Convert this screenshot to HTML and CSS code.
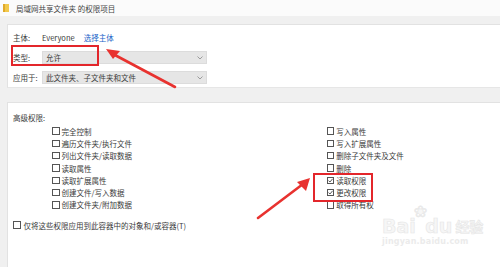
FILE: index.html
```html
<!DOCTYPE html>
<html lang="zh-CN">
<head>
<meta charset="utf-8">
<title>权限项目</title>
<link rel="stylesheet" href="styles.css">
</head>
<body>
<div class="page">
  <div class="titlebar">
    <svg class="folder" width="6" height="8" viewBox="0 0 6 8"><rect x="0" y="0" width="6" height="8" fill="#f2c94c"/><rect x="0" y="0" width="2" height="8" fill="#e0a92a"/></svg>
    <span class="title">局域网共享文件夹 的权限项目</span>
  </div>
  <div class="top-panel">
    <div class="form">
      <span class="label">主体:</span>
      <div class="principal"><span>Everyone</span><span class="link">选择主体</span></div>
      <span class="label">类型:</span>
      <div class="select"><span>允许</span><svg class="chev" width="6" height="4" viewBox="0 0 6 4"><path d="M0.5 0.5 L3 3 L5.5 0.5" fill="none" stroke="#888" stroke-width="0.8"/></svg></div>
      <span class="label">应用于:</span>
      <div class="select"><span>此文件夹、子文件夹和文件</span><svg class="chev" width="6" height="4" viewBox="0 0 6 4"><path d="M0.5 0.5 L3 3 L5.5 0.5" fill="none" stroke="#888" stroke-width="0.8"/></svg></div>
    </div>
  </div>
  <div class="lower-panel">
    <div class="section-title">高级权限:</div>
    <div class="perms">
      <div class="col">
        <label class="cb"><span class="box"></span>完全控制</label>
        <label class="cb"><span class="box"></span>遍历文件夹/执行文件</label>
        <label class="cb"><span class="box"></span>列出文件夹/读取数据</label>
        <label class="cb"><span class="box"></span>读取属性</label>
        <label class="cb"><span class="box"></span>读取扩展属性</label>
        <label class="cb"><span class="box"></span>创建文件/写入数据</label>
        <label class="cb"><span class="box"></span>创建文件夹/附加数据</label>
      </div>
      <div class="col">
        <label class="cb"><span class="box"></span>写入属性</label>
        <label class="cb"><span class="box"></span>写入扩展属性</label>
        <label class="cb"><span class="box"></span>删除子文件夹及文件</label>
        <label class="cb"><span class="box"></span>删除</label>
        <label class="cb"><span class="box checked"><svg width="5" height="5" viewBox="0 0 5 5"><path d="M0.5 2.6 L2 4 L4.6 0.8" fill="none" stroke="#333" stroke-width="0.8"/></svg></span>读取权限</label>
        <label class="cb"><span class="box checked"><svg width="5" height="5" viewBox="0 0 5 5"><path d="M0.5 2.6 L2 4 L4.6 0.8" fill="none" stroke="#333" stroke-width="0.8"/></svg></span>更改权限</label>
        <label class="cb"><span class="box"></span>取得所有权</label>
      </div>
    </div>
    <label class="cb only"><span class="box"></span>仅将这些权限应用到此容器中的对象和/或容器(T)</label>
  </div>

  <div class="mark mark-type"></div>
  <div class="mark mark-perm"></div>
  <svg class="arrows" width="500" height="267" viewBox="0 0 500 267">
    <path d="M175 87 L113 54" stroke="#e8322f" stroke-width="2.6" stroke-linecap="round"/>
    <path d="M106 49 L120 51 L113 59 Z" fill="#e8322f"/>
    <path d="M258 218 L303 184" stroke="#e8322f" stroke-width="2.6" stroke-linecap="round"/>
    <path d="M310 178 L306 191 L297 182 Z" fill="#e8322f"/>
  </svg>
  <div class="watermark">
    <div class="wm-logo"><span>Bai</span><span class="paw">❀</span><span>du</span><span class="wm-cn">经验</span></div>
    <div class="wm-url">jingyan.baidu.com</div>
  </div>
</div>
</body>
</html>
```

FILE: styles.css
```css
* { box-sizing: border-box; }
html, body { margin: 0; padding: 0; }
body {
  width: 500px;
  height: 267px;
  overflow: hidden;
  background: #f0f0f0;
  font-family: "Noto Sans CJK SC", "Noto Sans", sans-serif;
  font-size: 7.5px;
  color: #3a3a3a;
}
.page {
  position: relative;
  width: 500px;
  height: 267px;
  display: flex;
  flex-direction: column;
}
.titlebar {
  height: 16px;
  background: #fbfbfb;
  display: flex;
  align-items: center;
  padding-left: 3px;
  flex: none;
}
.folder { flex: none; }
.title { margin-left: 7px; color: #444; }

.top-panel {
  margin-top: 8px;
  margin-left: 7px;
  height: 64px;
  background: #fff;
  border-left: 1px solid #e2e2e2;
  border-top: 1px solid #e2e2e2;
  border-bottom: 1px solid #e6e6e6;
  flex: none;
  padding: 6px 0 0 5px;
}
.form {
  display: grid;
  grid-template-columns: 29px 165px;
  grid-template-rows: 13px 13px 13px;
  row-gap: 7px;
  align-items: center;
}
.label { line-height: 13px; }
.principal { display: flex; gap: 9px; align-items: center; }
.link { color: #1a64c8; }
.select {
  height: 13px;
  background: #e6e6e6;
  border: 1px solid #dcdcdc;
  display: flex;
  align-items: center;
  justify-content: space-between;
  padding: 0 3px 0 3px;
}
.chev { flex: none; }

.lower-panel {
  margin-top: 14px;
  margin-left: 7px;
  flex: 1;
  background: #fff;
  border-left: 1px solid #e2e2e2;
  border-top: 1px solid #e2e2e2;
  padding: 8px 0 0 5px;
}
.section-title { line-height: 13px; }
.perms {
  display: grid;
  grid-template-columns: 274.7px auto;
  padding-left: 39px;
  margin-top: 1px;
}
.col { display: flex; flex-direction: column; }
.cb {
  display: flex;
  align-items: center;
  height: 12.3px;
  gap: 2px;
  white-space: nowrap;
}
.box {
  width: 7.5px;
  height: 7.5px;
  border: 1px solid #555;
  background: #fff;
  flex: none;
  display: flex;
  align-items: center;
  justify-content: center;
}
.box svg { display: block; }
.only { margin-top: 8px; gap: 3px; }

.mark {
  position: absolute;
  border: 2.5px solid #e3262b;
}
.mark-type { left: 11px; top: 45px; width: 88px; height: 21px; }
.mark-perm { left: 313px; top: 173px; width: 60px; height: 29px; }
.arrows { position: absolute; left: 0; top: 0; pointer-events: none; }

.watermark {
  position: absolute;
  left: 382px;
  top: 203px;
  color: #f6f6f6;
  font-family: "DejaVu Sans", sans-serif;
}
.wm-logo {
  display: flex;
  align-items: flex-end;
  font-size: 19px;
  font-weight: bold;
  line-height: 22px;
  -webkit-text-stroke: 0.6px #e6e6e6;
  height: 34px;
}
.paw { font-size: 16px; margin: 0 -2px; align-self: flex-start; line-height: 18px; }
.wm-cn { font-family: "Noto Sans CJK SC", sans-serif; font-size: 14px; margin-left: 3px; }
.wm-url {
  font-size: 8px;
  font-weight: bold;
  color: #ebebeb;
  letter-spacing: 0.2px;
}
```
